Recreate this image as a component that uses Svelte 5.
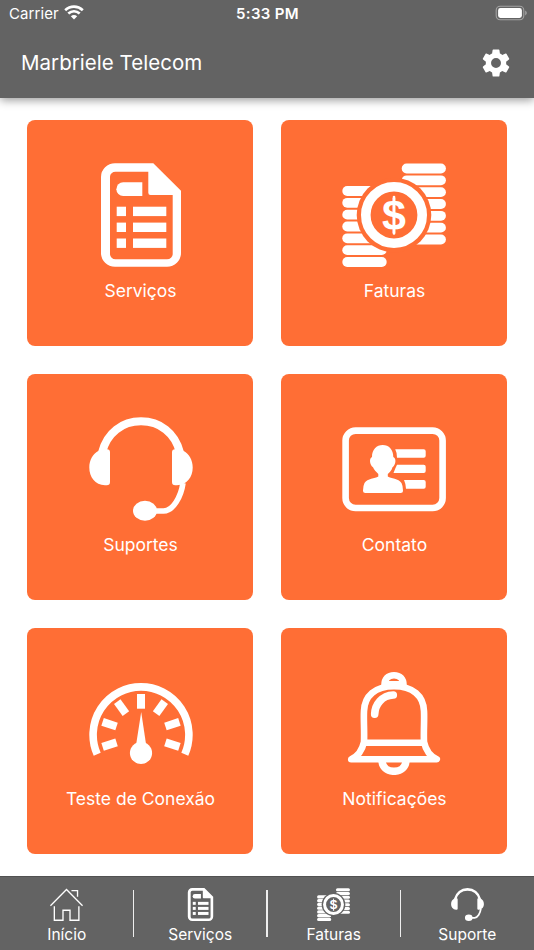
<script>
  const cards = [
    { label: 'Serviços', icon: 'doc' },
    { label: 'Faturas', icon: 'coins' },
    { label: 'Suportes', icon: 'headset' },
    { label: 'Contato', icon: 'contact' },
    { label: 'Teste de Conexão', icon: 'gauge' },
    { label: 'Notificações', icon: 'bell' },
  ];
  const tabs = [
    { label: 'Início', icon: 'home' },
    { label: 'Serviços', icon: 'doc' },
    { label: 'Faturas', icon: 'coins' },
    { label: 'Suporte', icon: 'headset' },
  ];
  const rows = [0, 1, 2, 3, 4, 5, 6];
</script>

{#snippet icon(name)}
  <svg class="icon" viewBox="0 0 104 104" fill="#fff" aria-hidden="true">
    {#if name === 'doc'}
      <path fill-rule="evenodd" d="M26 .3H64.3L92 27.7V90a14 13.7 0 0 1-14 13.7H26A14 13.7 0 0 1 12 90V14A14 13.7 0 0 1 26 .3ZM59.3 8.7H26.5A5.5 5 0 0 0 21 13.7V91a5.5 5.3 0 0 0 5.5 5.3H78a5.7 5.3 0 0 0 5.7-5.3V32H61.5A2.2 2.2 0 0 1 59.3 29.8Z" />
      <path d="M53.3 19.3V33H34.2a6.85 6.85 0 0 1 0-13.7Z" />
      {#each [43.7, 59.6, 75.5] as y}
        <rect x="27.7" {y} width="9.3" height="9.4" /><rect x="44" {y} width="33.3" height="9.4" />
      {/each}
    {:else if name === 'coins'}
      {#each rows as r}
        <rect x="59.7" y={0.6 + r * 11.83} width="44.2" height="9.8" rx="4.9" />
        <rect x="0.3" y={23.1 + r * 11.83} width="44.4" height="9.8" rx="4.9" />
      {/each}
      <circle cx="52" cy="52" r="37.3" fill="var(--surface)" />
      <circle cx="52" cy="52" r="28.2" fill="none" stroke="#fff" stroke-width="9.6" />
      <rect x="50.7" y="32.7" width="2.6" height="39" rx="1.3" />
      <text class="coin" x="52" y="66.8" text-anchor="middle">$</text>
    {:else if name === 'headset'}
      <path d="M13.2 35C18 16 33 4.3 52 4.3S86 16 90.8 35" fill="none" stroke="#fff" stroke-width="8" />
      <path d="M14.5 32.3H18a3 3 0 0 1 3 3V65a3.3 3.3 0 0 1-3.3 3.3H16C6 68 .3 60 .3 50.5C.3 43 4 37 9.2 34Z" />
      <path d="M89.5 32.3H86a3 3 0 0 0-3 3V65a3.3 3.3 0 0 0 3.3 3.3H88C98 68 103.7 60 103.7 50.5C103.7 43 100 37 94.8 34Z" />
      <path d="M94 66C92 80 84 94 74.5 94H66" fill="none" stroke="#fff" stroke-width="5.6" />
      <ellipse cx="56" cy="93.8" rx="12" ry="10" />
    {:else if name === 'contact'}
      <rect x="3.6" y="13.6" width="97" height="77.4" rx="10" fill="none" stroke="#fff" stroke-width="6.6" />
      <path d="M40.7 28C47 28 51.3 32.5 51.3 40C54.5 41 54 48 50.5 50.3C49.7 53.5 47.5 55.5 45.8 57V59.5C49 62 56.5 61 59.5 66Q61 69 61 73.5Q61 76 58.5 76H23.5Q21 76 21 73.5Q21 69 22.5 66C25.5 61 33 62 36.3 59.5V57C34 55 32 52.5 31 50.3C27.5 48 27 41 30 40C30 32.5 34.5 28 40.7 28Z" />
      <path d="M53.2 32.3H81.7a2 2 0 0 1 2 2v4.4a2 2 0 0 1-2 2H55Q55 35.5 53.2 32.3ZM55 47.7H81.7a2 2 0 0 1 2 2V54a2 2 0 0 1-2 2H51.5Q53.5 50.5 55 47.7ZM62 63H81.7a2 2 0 0 1 2 2v4.7a2 2 0 0 1-2 2H64Q63.5 66 62 63Z" />
    {:else if name === 'gauge'}
      <path d="M8.2 83.2A47.9 47.9 0 1 1 95.8 83.2" fill="none" stroke="#fff" stroke-width="7.6" />
      {#each [-108, -72, -36, 0, 36, 72, 108] as a}
        <rect x="48" y="23" width="8" height="14.7" transform="rotate({a} 52 63.4)" />
      {/each}
      <path d="M52.2 41 57 73H47.2Z" /><circle cx="52" cy="82" r="11.1" />
    {:else if name === 'bell'}
      <g fill="none" stroke="#fff" stroke-width="6.6">
        <path d="M22 71C22.5 59 21.5 50 22 40C22.5 25 33 15.2 52 15.2S81.5 25 82 40C82.5 50 81.5 59 82 71C84 80 88.5 85.5 94.8 88.2H9.2C15.5 85.5 20 80 22 71Z" stroke-linejoin="round" />
        <path d="M22 71.7H82" />
        <path d="M42.5 14C42.5 8 46 4.2 52 4.2S61.5 8 61.5 14" />
        <path d="M40 89C40 96 45 100.3 52 100.3S64 96 64 89" stroke-width="7.5" />
        <path d="M32.7 43.2C33 33.5 40 24.5 51.3 24" stroke-width="7.6" stroke-linecap="round" />
      </g>
      <path d="M43 10H61V18H43Z" />
    {/if}
  </svg>
{/snippet}

<div class="app">
  <header>
    <div class="status">
      <div class="carrier"><span>Carrier</span>
        <svg width="20" height="15" viewBox="0 0 20 15" fill="none" stroke="#fff" stroke-width="2.7">
          <path d="M1.2 5.2C6.2.5 13.8.5 18.8 5.2" /><path d="M4.3 8.6C7.7 5.5 12.3 5.5 15.7 8.6" /><path d="M10 14.5 6.8 11.3Q10 8.8 13.2 11.3Z" fill="#fff" stroke="none" />
        </svg>
      </div>
      <strong>5:33 PM</strong>
      <svg class="battery" width="32" height="16" viewBox="0 0 32 16">
        <rect x="1.2" y="1.2" width="27.6" height="13.6" rx="4" fill="none" stroke="#a3a3a3" stroke-width="1.1" />
        <rect x="3.1" y="3.1" width="23.8" height="9.8" rx="2.3" fill="#fff" />
        <path d="M30.2 5.6Q31.8 6.5 31.8 8T30.2 10.4Z" fill="#a3a3a3" />
      </svg>
    </div>
    <div class="bar">
      <h1>Marbriele Telecom</h1>
      <svg width="34" height="34" viewBox="0 0 24 24" fill="#fff" role="img" aria-label="Configurações">
        <path d="M19.14 12.94c.04-.3.06-.61.06-.94 0-.32-.02-.64-.07-.94l2.03-1.58a.49.49 0 0 0 .12-.61l-1.92-3.32a.488.488 0 0 0-.59-.22l-2.39.96c-.5-.38-1.03-.7-1.62-.94l-.36-2.54a.484.484 0 0 0-.48-.41h-3.84c-.24 0-.43.17-.47.41l-.36 2.54c-.59.24-1.13.57-1.62.94l-2.39-.96a.488.488 0 0 0-.59.22L2.74 8.87c-.12.21-.08.47.12.61l2.03 1.58c-.05.3-.09.63-.09.94s.02.64.07.94l-2.03 1.58a.49.49 0 0 0-.12.61l1.92 3.32c.12.22.37.29.59.22l2.39-.96c.5.38 1.03.7 1.62.94l.36 2.54c.05.24.24.41.48.41h3.84c.24 0 .44-.17.47-.41l.36-2.54c.59-.24 1.13-.56 1.62-.94l2.39.96c.22.08.47 0 .59-.22l1.92-3.32a.49.49 0 0 0-.12-.61ZM12 15.5A3.5 3.5 0 1 1 12 8.5a3.5 3.5 0 0 1 0 7Z" />
      </svg>
    </div>
  </header>
  <main>
    {#each cards as card}
      <button class="card">{@render icon(card.icon)}<span>{card.label}</span></button>
    {/each}
  </main>
  <nav>
    {#each tabs as tab}
      <button class="tab">
        {#if tab.icon === 'home'}
          <svg class="icon" viewBox="0 0 32 32" fill="none" stroke="#fff" stroke-width="1.3" aria-hidden="true">
            <path d="M.4 17.2 16 1.4 31.6 17.2M4.2 17.8V31.3H12.6V21.6H19.4V31.3H28V17.8M20.8 2.6H26.7V8.4" />
          </svg>
        {:else}
          {@render icon(tab.icon)}
        {/if}
        <span>{tab.label}</span>
      </button>
    {/each}
  </nav>
</div>

<style>
  .app { width: 534px; height: 950px; display: flex; flex-direction: column; overflow: hidden; background: #fff; color: #fff; font-family: Inter, "Liberation Sans", sans-serif; }
  header { height: 98px; flex: none; background: #636363; box-shadow: 0 2px 9px rgba(0, 0, 0, .42); }
  .status { height: 27px; display: grid; grid-template-columns: 1fr auto 1fr; align-items: center; padding: 0 8px 0 9px; font-size: 15px; line-height: 27px; }
  .carrier { display: flex; align-items: center; gap: 5px; letter-spacing: .1px; }
  .carrier svg { margin-top: -2px; }
  strong { font-weight: 600; letter-spacing: .35px; }
  .battery { justify-self: end; margin: -1px -1px 0 0; }
  .bar { height: 71px; display: flex; align-items: center; justify-content: space-between; padding: 0 21px; }
  h1 { margin: 0; font-size: 20.5px; font-weight: 400; letter-spacing: .03px; }
  main { flex: 1; display: grid; grid-template-columns: 225.6px 225.6px; grid-auto-rows: 225.6px; gap: 28.4px; justify-content: center; padding-top: 22px; }
  button { border: 0; margin: 0; padding: 0; color: inherit; font: inherit; display: flex; flex-direction: column; align-items: center; }
  .card { --surface: #ff6e35; background: #ff6e35; border-radius: 8px; padding: 43px 0 0 1px; }
  .card .icon { width: 104px; height: 104px; }
  .card span { margin-top: 11px; font-size: 17.5px; line-height: 26px; letter-spacing: 0; }
  .coin { font: bold 43px "Liberation Sans", sans-serif; }
  nav { height: 74px; flex: none; display: flex; box-sizing: border-box; border-top: 1px solid #515151; background: #636363; }
  .tab { --surface: #636363; flex: 1; background: none; padding-top: 11px; position: relative; }
  .tab .icon { width: 33px; height: 33px; }
  .tab span { margin-top: 4px; font-size: 15.5px; line-height: 20px; letter-spacing: 0; }
  .tab + .tab::before { content: ""; position: absolute; left: -1px; top: 13px; width: 1.5px; height: 47px; background: #eee; }
</style>
